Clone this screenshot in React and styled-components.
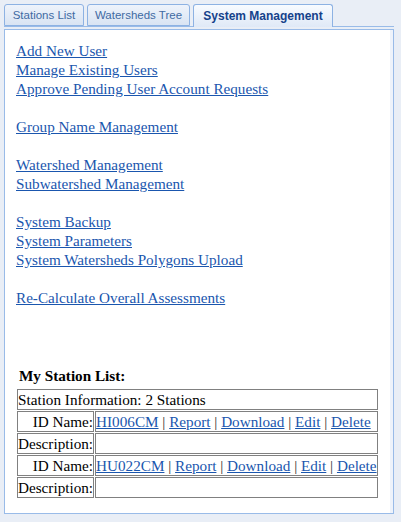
import React from "react";
import styled, { createGlobalStyle } from "styled-components";

const GlobalStyle = createGlobalStyle`
  html, body {
    margin: 0;
    padding: 0;
    background: #e9eef6;
  }
`;

const Frame = styled.div`
  width: 401px;
  height: 522px;
  box-sizing: border-box;
  padding: 4px 7px 0 4px;
  background: #e9eef6;
`;

const TabStrip = styled.div`
  display: flex;
  height: 22px;
  border-bottom: 1px solid #99bbe8;
`;

const Tab = styled.div`
  box-sizing: border-box;
  width: ${(p) => p.$w}px;
  margin-right: ${(p) => p.$gap || 0}px;
  height: ${(p) => (p.$active ? "23px" : "22px")};
  display: flex;
  align-items: center;
  justify-content: center;
  border: 1px solid #8db2e3;
  border-bottom: ${(p) => (p.$active ? "none" : "1px solid #8db2e3")};
  border-radius: 3px 3px 0 0;
  background: ${(p) =>
    p.$active
      ? "linear-gradient(#f8fbff, #dfe9f7)"
      : "linear-gradient(#eef3fb, #d9e4f3)"};
  font-family: "Liberation Sans", Arial, sans-serif;
  font-size: ${(p) => (p.$active ? "12px" : "11.5px")};
  font-weight: ${(p) => (p.$active ? "bold" : "normal")};
  color: ${(p) => (p.$active ? "#15428b" : "#416aa3")};
  white-space: nowrap;
`;

const Body = styled.div`
  box-sizing: border-box;
  margin-top: 2px;
  height: 485px;
  border: 1px solid #99bbe8;
  box-shadow: inset -3px 0 0 #eef3fb;
  background: #fff;
  padding: 11px 11px;
  font-family: "Liberation Serif", "Times New Roman", serif;
  font-size: 15.2px;
  line-height: 19px;
  color: #000;
`;

const LinkGroup = styled.div`
  display: flex;
  flex-direction: column;
  align-items: flex-start;
  margin-bottom: 19px;
`;

const MenuLink = styled.a`
  color: #1a56ae;
  text-decoration: underline;
  cursor: pointer;
`;

const StationSection = styled.div`
  margin-top: 59px;
  padding-left: 1px;
`;

const Heading = styled.div`
  font-weight: bold;
  padding-left: 2px;
  margin-bottom: 3px;
`;

const StationTable = styled.table`
  border-collapse: separate;
  border-spacing: 1px;
  margin-left: -1px;
  font-family: "Liberation Serif", "Times New Roman", serif;
  font-size: 15.2px;
  line-height: 19px;
`;

const Cell = styled.td`
  border: 1px solid #808080;
  padding: 0;
  height: 19px;
  text-align: ${(p) => p.$align || "left"};
  white-space: nowrap;
`;

const Sep = styled.span`
  color: #333;
`;

const groups = [
  ["Add New User", "Manage Existing Users", "Approve Pending User Account Requests"],
  ["Group Name Management"],
  ["Watershed Management", "Subwatershed Management"],
  ["System Backup", "System Parameters", "System Watersheds Polygons Upload"],
  ["Re-Calculate Overall Assessments"],
];

const stations = [
  { id: "HI006CM", trail: true },
  { id: "HU022CM", trail: false },
];

function Actions({ id, trail }) {
  const items = [id, "Report", "Download", "Edit", "Delete"];
  return (
    <>
      {items.map((t, i) => (
        <React.Fragment key={t}>
          {i > 0 && <Sep> | </Sep>}
          <MenuLink>{t}</MenuLink>
        </React.Fragment>
      ))}
      {trail && " "}
    </>
  );
}

export default function App() {
  return (
    <>
      <GlobalStyle />
      <Frame>
        <TabStrip>
          <Tab $w={80} $gap={3}>Stations List</Tab>
          <Tab $w={103} $gap={3}>Watersheds Tree</Tab>
          <Tab $w={140} $active>System Management</Tab>
        </TabStrip>
        <Body>
          {groups.map((g, i) => (
            <LinkGroup key={i}>
              {g.map((l) => (
                <MenuLink key={l}>{l}</MenuLink>
              ))}
            </LinkGroup>
          ))}
          <StationSection>
            <Heading>My Station List:</Heading>
            <StationTable>
              <tbody>
                <tr>
                  <Cell colSpan={2}>Station Information: 2 Stations</Cell>
                </tr>
                {stations.map((s) => (
                  <React.Fragment key={s.id}>
                    <tr>
                      <Cell $align="right">ID Name:</Cell>
                      <Cell>
                        <Actions id={s.id} trail={s.trail} />
                      </Cell>
                    </tr>
                    <tr>
                      <Cell>Description:</Cell>
                      <Cell />
                    </tr>
                  </React.Fragment>
                ))}
              </tbody>
            </StationTable>
          </StationSection>
        </Body>
      </Frame>
    </>
  );
}
